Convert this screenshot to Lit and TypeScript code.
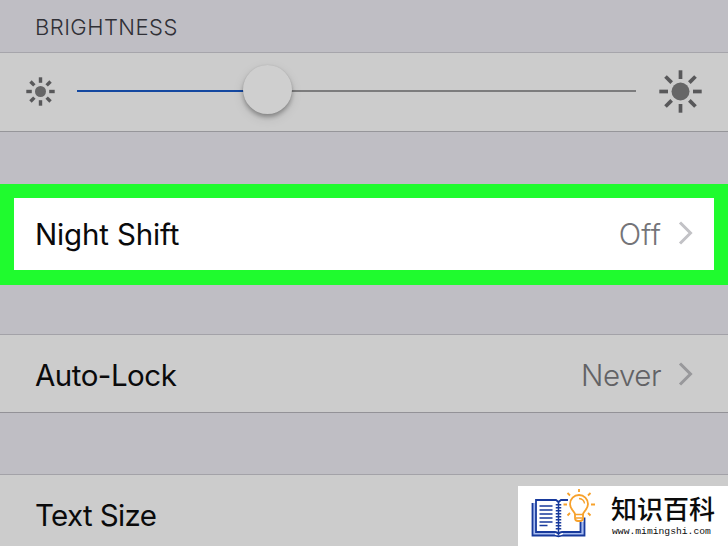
import { LitElement, html, css, svg } from "lit";
import { customElement, property } from "lit/decorators.js";

@customElement("sun-icon")
class SunIcon extends LitElement {
  @property({ type: Number }) size = 30;
  @property({ type: Number }) core = 5;
  @property({ type: Number }) inner = 9;
  @property({ type: Number }) ray = 3;
  static styles = css`
    :host { display: block; flex: none; }
    svg { display: block; }
    circle { fill: #666667; }
    line { stroke: #58585a; }
  `;
  render() {
    const c = this.size / 2;
    return html`<svg width=${this.size} height=${this.size}>
      <circle cx=${c} cy=${c} r=${this.core}></circle>
      ${[0, 45, 90, 135, 180, 225, 270, 315].map(
        (a) => svg`<line x1=${c} x2=${c} y1=${c - this.inner} y2=${0.3} stroke-width=${this.ray} transform="rotate(${a} ${c} ${c})"></line>`
      )}
    </svg>`;
  }
}

@customElement("setting-row")
class SettingRow extends LitElement {
  @property() label = "";
  @property() value = "";
  static styles = css`
    :host { display: flex; align-items: center; box-sizing: border-box; font: 400 29.5px/36px Inter, sans-serif; color: #0a0a0b; }
    .label { flex: 1; font-weight: 390; letter-spacing: var(--label-spacing, -0.5px); }
    .value { font-weight: 330; color: var(--value-color, #626265); letter-spacing: var(--value-spacing, -0.5px); margin-right: 17px; }
    svg { display: block; margin: 0 var(--edge, 35px) 2px 0; }
    path { fill: none; stroke: var(--arrow-color, #98989b); stroke-width: 3; }
  `;
  render() {
    return html`<span class="label">${this.label}</span>
      ${this.value
        ? html`<span class="value">${this.value}</span>
            <svg width="15" height="24"><path d="M2 1.5 12.5 12 2 22.5" /></svg>`
        : ""}`;
  }
}

@customElement("app-root")
class AppRoot extends LitElement {
  static styles = css`
    :host { display: block; position: relative; width: 728px; height: 546px; overflow: hidden; background: #bfbec4; font-family: Inter, sans-serif; }
    .heading { height: 52px; box-sizing: border-box; padding: 13px 0 0 35px; font-size: 22px; line-height: 28px; letter-spacing: 0.45px; font-weight: 350; color: #303036; }
    .brightness { display: flex; align-items: center; box-sizing: border-box; height: 80px; padding: 0 26px 2px; background: #ccc; border-top: 1px solid #a6a5ab; border-bottom: 1px solid #96969a; }
    .track { position: relative; flex: 1; margin: 0 23px 0 22px; height: 2px; background: linear-gradient(90deg, #1448a0 190px, #7c7c7d 190px); }
    .knob { position: absolute; left: 166px; top: -25px; width: 49px; height: 49px; border-radius: 50%; background: #cfcfcf; box-shadow: 0 3px 4px rgba(0,0,0,.28), 0 4px 12px rgba(0,0,0,.1), 0 0 1px rgba(0,0,0,.12); }
    .highlight { margin-top: 52px; height: 101px; box-sizing: border-box; border: solid #1ffb2e; border-width: 14px 14px 15px; background: #fff; }
    .highlight setting-row { height: 72px; padding-left: 21px; --edge: 21px; --value-color: #747478; --arrow-color: #c2c2c6; --label-spacing: -0.15px; --value-spacing: 0.1px; }
    .card { background: #ccc; border-top: 1px solid #a3a2a8; border-bottom: 1px solid #939297; padding: 2px 0 0 35px; height: 79px; }
    .lock { margin-top: 49px; }
    .size { margin-top: 61px; padding-top: 3px; --label-spacing: -0.65px; }
    .brand { position: absolute; left: 518px; top: 486px; width: 210px; height: 60px; background: #fff; display: flex; }
    .brand svg { flex: none; margin-left: 11px; }
    .words { margin-left: 16px; padding-top: 8px; color: #0c0c0c; white-space: nowrap; }
    .name { font: 500 26px/28px "Noto Sans CJK SC", sans-serif; }
    .url { font: 400 9.7px/12px "Liberation Mono", monospace; margin-top: 4px; padding-left: 1px; }
    .book { fill: none; stroke: #183a9c; stroke-width: 1.8; }
    .pages { fill: #a9bdf0; stroke: none; }
    .bulb { fill: #fff; stroke: #f7a12b; stroke-width: 1.8; }
  `;
  render() {
    return html`
      <div class="heading">BRIGHTNESS</div>
      <div class="brightness">
        <sun-icon size="29" core="5.5" inner="8.7" ray="3.4"></sun-icon>
        <div class="track"><div class="knob"></div></div>
        <sun-icon size="43" core="9" inner="12.5" ray="3.7"></sun-icon>
      </div>
      <div class="highlight"><setting-row label="Night Shift" value="Off"></setting-row></div>
      <setting-row class="card lock" label="Auto-Lock" value="Never"></setting-row>
      <setting-row class="card size" label="Text Size"></setting-row>
      <div class="brand">
        <svg width="66" height="60" viewBox="529 486 66 60">
          <path class="pages" d="M533 503h3v29h19v3h-22zM563 532h18v-10h3v13h-21z" />
          <g class="book">
            <path d="M568 500h-7l-2.500 2-2.500-2h-20v32h19q2 0 3.500 2 1.500-2 3.500-2h18.500v-10" />
            <path d="M532.500 503v32.500h22q4 1.500 8 0h22v-18" />
            <path d="M539.500 506h13M539.500 510h13M539.500 514h13M539.500 518h13M539.500 522h13M539.500 525.500h8" stroke-width="1.700" />
            <path d="M558.500 502v31" stroke-width="1.500" />
            <path d="M558.500 504v27" stroke-width="5.500" stroke-dasharray="1.500 1.500" />
          </g>
          <g class="bulb">
            <path d="M575 514.500c0-3-5-5-5-10.500a9 9 0 0 1 18 0c0 5.500-5 7.500-5 10.500v3.500q0 3-3 3h-2q-3 0-3-3z" />
            <path d="M574.500 514.500h9M576 518h6" stroke-width="1.500" />
            <path d="M579 498.500q5 .5 5.500 5" fill="none" stroke-width="1.300" />
            <path d="M579 489v3M567.500 493l2.500 2.500M590.500 493l-2.500 2.500M563.500 504.500h3.500M591 504.500h4M567.500 515.500l2.500-2.500M590.500 515.500l-2.500-2.500" />
          </g>
        </svg>
        <div class="words"><div class="name">知识百科</div><div class="url">www.mimingshi.com</div></div>
      </div>`;
  }
}
